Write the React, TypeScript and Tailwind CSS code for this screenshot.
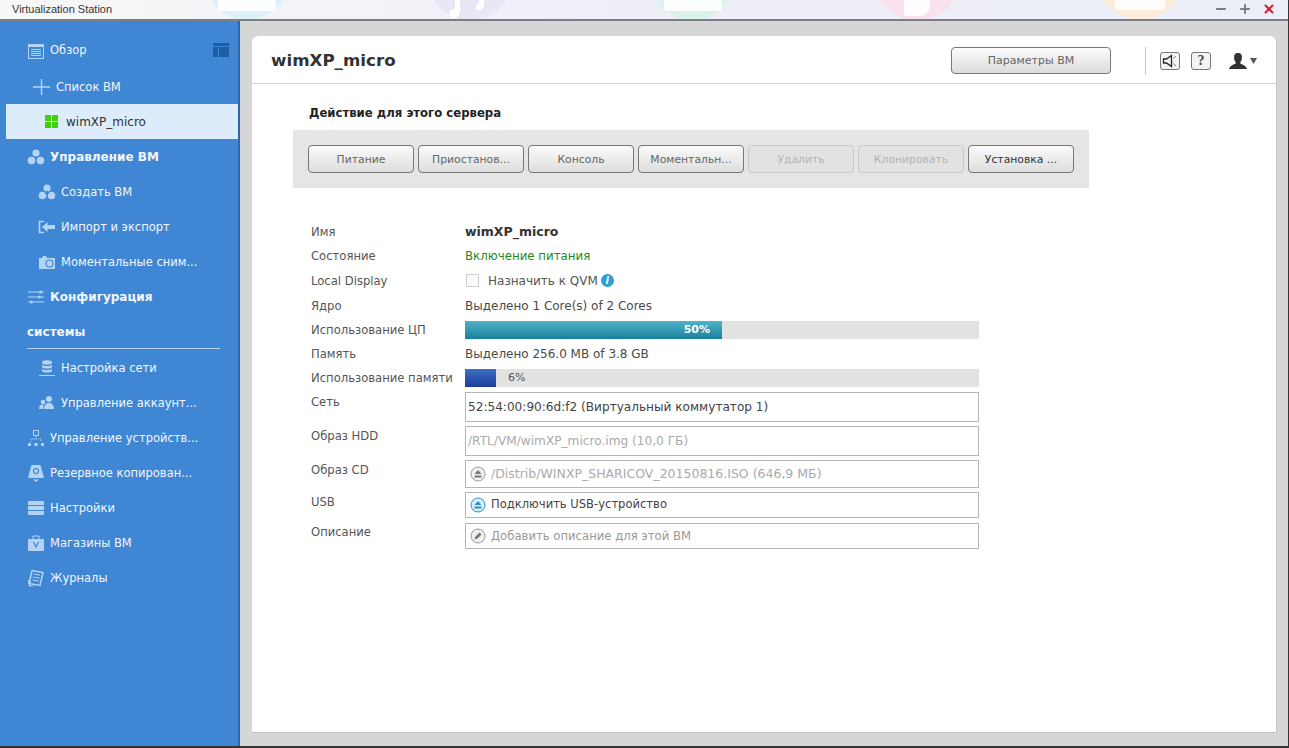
import type { ReactNode } from "react";
import { Minus, Plus, X } from "lucide-react";

const ICON = "#b4d4f5";

function Svg({ children, w = 18, h = 18 }: { children: ReactNode; w?: number; h?: number }) {
  return (
    <svg width={w} height={h} viewBox={`0 0 ${w} ${h}`} className="shrink-0">
      {children}
    </svg>
  );
}

const OverviewIcon = () => (
  <Svg>
    <rect x="1.5" y="2.5" width="15" height="14" fill="none" stroke={ICON} />
    <rect x="1" y="2" width="16" height="3" fill={ICON} />
    <path d="M4 7.5h10M4 9.5h10M4 11.5h10M4 13.5h10" stroke={ICON} />
  </Svg>
);
const PlusIcon = () => (
  <Svg>
    <path d="M0 9h17M8.5 1v16" stroke={ICON} strokeWidth="1.4" />
  </Svg>
);
const GroupIcon = () => (
  <Svg>
    <circle cx="9" cy="5" r="3.6" fill={ICON} />
    <circle cx="4.5" cy="12.5" r="3.8" fill={ICON} />
    <circle cx="13.5" cy="12.5" r="3.8" fill={ICON} />
  </Svg>
);
const CreateIcon = () => (
  <Svg>
    <circle cx="9" cy="5" r="3.6" fill={ICON} />
    <circle cx="4.5" cy="12.5" r="3.8" fill={ICON} />
    <circle cx="13.5" cy="12.5" r="3.8" fill={ICON} />
    <path d="M9 7.5v5M6.5 10h5" stroke="#3f86d4" strokeWidth="1.2" />
  </Svg>
);
const ImportIcon = () => (
  <Svg>
    <path d="M6 3.5H1.5v11H6" fill="none" stroke={ICON} strokeWidth="1.6" />
    <path d="M4 9l5.5-5v3H17v4H9.5v3z" fill={ICON} />
  </Svg>
);
const CameraIcon = () => (
  <Svg>
    <path d="M1 5h3l1-2h3l1 2h8v11H1z" fill={ICON} />
    <circle cx="11.5" cy="10.5" r="3.5" fill="none" stroke="#3f86d4" strokeWidth="1.2" />
  </Svg>
);
const SlidersIcon = () => (
  <Svg>
    <path d="M1 4h16M1 9h16M1 14h16" stroke={ICON} />
    <rect x="12" y="2.5" width="3" height="3" rx="1.5" fill={ICON} />
    <rect x="11" y="7.5" width="3" height="3" rx="1.5" fill={ICON} />
    <rect x="3" y="12.5" width="3" height="3" rx="1.5" fill={ICON} />
  </Svg>
);
const DbIcon = () => (
  <Svg>
    <ellipse cx="9" cy="3.5" rx="5" ry="2.2" fill={ICON} />
    <path d="M4 5.5c1 2 9 2 10 0v2.5c-1 2-9 2-10 0zM4 9.5c1 2 9 2 10 0V12c-1 2-9 2-10 0z" fill={ICON} />
    <path d="M1 16.5h16" stroke={ICON} />
  </Svg>
);
const UsersIcon = () => (
  <Svg>
    <circle cx="11" cy="5" r="3" fill={ICON} />
    <path d="M6 15c0-4 2-5 3.5-6h3c1.500 1 3.500 2 3.500 6z" fill={ICON} />
    <circle cx="5" cy="8" r="2.300" fill={ICON} />
    <path d="M1 15c0-3 1.500-4 3-4.500h1.500L5 15z" fill={ICON} />
  </Svg>
);
const TreeIcon = () => (
  <Svg>
    <rect x="6.500" y="1.500" width="5" height="5" fill="none" stroke={ICON} />
    <path d="M9 7v3M4 13v-3h10v3" fill="none" stroke={ICON} strokeDasharray="1 1" />
    <rect x="1" y="14" width="3" height="3" fill={ICON} />
    <rect x="7.500" y="14" width="3" height="3" fill={ICON} />
    <rect x="14" y="14" width="3" height="3" fill={ICON} />
  </Svg>
);
const BackupIcon = () => (
  <Svg>
    <path d="M4.500 1h9L17 14H1z" fill={ICON} />
    <path d="M6 15.500h6L9 18z" fill={ICON} />
    <circle cx="9" cy="7" r="2.500" fill="none" stroke="#3f86d4" strokeWidth="1.2" />
  </Svg>
);
const ServerIcon = () => (
  <Svg>
    <rect x="1" y="2" width="16" height="4" fill={ICON} />
    <rect x="1" y="7" width="16" height="4" fill={ICON} />
    <rect x="1" y="12" width="16" height="4" fill={ICON} />
  </Svg>
);
const BagIcon = () => (
  <Svg>
    <path d="M6 5V2h6v3" fill="none" stroke={ICON} />
    <rect x="1" y="5" width="16" height="12" fill={ICON} />
    <path d="M6.500 8l2.500 5 2.500-5" fill="none" stroke="#3f86d4" strokeWidth="1.2" />
  </Svg>
);
const LogIcon = () => (
  <Svg>
    <path d="M5 1.500l11 2-3 13-11-2z" fill="none" stroke={ICON} strokeWidth="1.500" />
    <path d="M1 11l3 1-1 4 5 1-6 .5z" fill={ICON} />
    <path d="M6.500 5l6.500 1.200M6 8l6.500 1.200M5.500 11l6.500 1.200" stroke={ICON} />
  </Svg>
);

function NavItem({
  icon,
  label,
  bold,
  indent = "pl-[27px]",
  gap = "gap-[5px]",
}: {
  icon?: ReactNode;
  label: string;
  bold?: boolean;
  indent?: string;
  gap?: string;
}) {
  return (
    <div className={`h-[35px] flex items-center ${indent} ${gap} text-[#f2f7fd] ${bold ? "text-[12px] font-bold" : "text-[11.5px]"}`}>
      {icon}
      <span className={`whitespace-nowrap ${bold ? "" : "pt-[2px]"}`}>{label}</span>
    </div>
  );
}

function Sidebar() {
  return (
    <aside className="w-[240px] shrink-0 bg-[#3f86d4] border-r-2 border-[#2c67a9] pt-[12px] pl-[6px]">
      <div className="-ml-[6px] h-[36px] flex items-center justify-between pl-[27px] pr-[9px] text-[11.5px] text-[#f2f7fd]">
        <div className="flex items-center gap-[5px]">
          <OverviewIcon />
          <span>Обзор</span>
        </div>
        <div className="w-[16px] h-[14px] flex flex-col gap-px mb-[2px]">
          <div className="h-[3px] bg-[#1c5da3]" />
          <div className="flex-1 flex gap-px">
            <div className="w-[5px] bg-[#1c5da3]" />
            <div className="flex-1 bg-[#1c5da3]" />
          </div>
        </div>
      </div>
      <div className="-ml-[6px]">
        <NavItem icon={<PlusIcon />} label="Список ВМ" indent="pl-[33px]" />
      </div>
      <div className="h-[35px] w-[232px] bg-[#dcecfb] flex items-center pl-[39px] gap-[8px] text-[12px] text-[#333333]">
        <div className="grid grid-cols-2 gap-px w-[13px] h-[13px]">
          <div className="bg-[#3fd10c]" />
          <div className="bg-[#3fd10c]" />
          <div className="bg-[#3fd10c]" />
          <div className="bg-[#3fd10c]" />
        </div>
        <span>wimXP_micro</span>
      </div>
      <div className="-ml-[6px]">
        <NavItem icon={<GroupIcon />} label="Управление ВМ" bold />
        <NavItem icon={<CreateIcon />} label="Создать ВМ" indent="pl-[38px]" />
        <NavItem icon={<ImportIcon />} label="Импорт и экспорт" indent="pl-[38px]" />
        <NavItem icon={<CameraIcon />} label="Моментальные сним..." indent="pl-[38px]" />
        <NavItem icon={<SlidersIcon />} label="Конфигурация" bold />
        <NavItem label="системы" bold />
        <div className="h-px bg-[#b7d3f1] ml-[27px] w-[193px] mb-px -mt-px" />
        <NavItem icon={<DbIcon />} label="Настройка сети" indent="pl-[38px]" />
        <NavItem icon={<UsersIcon />} label="Управление аккаунт..." indent="pl-[38px]" />
        <NavItem icon={<TreeIcon />} label="Управление устройств..." />
        <NavItem icon={<BackupIcon />} label="Резервное копирован..." />
        <NavItem icon={<ServerIcon />} label="Настройки" />
        <NavItem icon={<BagIcon />} label="Магазины ВМ" />
        <NavItem icon={<LogIcon />} label="Журналы" />
      </div>
    </aside>
  );
}

function ActionButton({ label, disabled, dark }: { label: string; disabled?: boolean; dark?: boolean }) {
  return (
    <button
      className={`w-[106px] h-[28px] rounded-[4px] border pt-[2px] text-[10.8px] ${
        disabled
          ? "border-[#c8c8c8] bg-[#e2e2e2] text-[#b4b4b4]"
          : `border-[#777777] bg-gradient-to-b from-[#fbfbfb] to-[#dddddd] ${dark ? "text-[#333333]" : "text-[#666666]"}`
      }`}
    >
      {label}
    </button>
  );
}

function Row({ label, h, children }: { label: string; h: string; children: ReactNode }) {
  return (
    <div className={`flex items-center ${h}`}>
      <div className="w-[154px] shrink-0 pt-[2px] text-[11.6px] text-[#555555]">{label}</div>
      <div className="flex-1 min-w-0">{children}</div>
    </div>
  );
}

function BoxRow({ label, h, lh = "leading-[20px]", children }: { label: string; h: string; lh?: string; children: ReactNode }) {
  return (
    <div className={`flex ${h}`}>
      <div className={`w-[154px] shrink-0 text-[11.6px] text-[#555555] ${lh}`}>{label}</div>
      <div className="flex-1 border border-[#b5b5b5] flex items-center gap-[5px] px-[2px]">{children}</div>
    </div>
  );
}

function DiscIcon({ active, pencil }: { active?: boolean; pencil?: boolean }) {
  const ring = active ? "#2f8fc4" : "#9a9a9a";
  const fill = active ? "#d8eefa" : "#f0f0f0";
  return (
    <svg width="16" height="16" viewBox="0 0 16 16" className="shrink-0 ml-[2px]">
      <circle cx="8" cy="8" r="7" fill={fill} stroke={ring} />
      {pencil ? (
        <path d="M4.500 11.500l1-3 4-4 2 2-4 4z" fill="#777777" />
      ) : (
        <>
          <path d="M8 4l3.500 4h-7z" fill={active ? "#2f8fc4" : "#777777"} />
          <rect x="4.500" y="9.500" width="7" height="2" fill={active ? "#2f8fc4" : "#777777"} />
        </>
      )}
    </svg>
  );
}

function Header() {
  return (
    <div className="h-[48px] shrink-0 flex items-center border-b border-[#d4d4d4] pl-[19px] pt-[2px]">
      <h1 className="text-[16.7px] font-bold text-[#333333] flex-1">wimXP_micro</h1>
      <button className="w-[160px] h-[27px] rounded-[4px] border border-[#777777] bg-gradient-to-b from-[#fbfbfb] to-[#dcdcdc] pt-[2px] text-[11px] text-[#666666]">
        Параметры ВМ
      </button>
      <div className="w-px h-[28px] bg-[#c4c4c4] ml-[34px] mr-[14px]" />
      <div className="w-[20px] h-[18px] rounded-[3px] border border-[#777777] bg-[#f4f4f4] flex items-center justify-center">
        <svg width="16" height="14" viewBox="0 0 16 14">
          <path d="M1.500 5h3l5-3.500v11l-5-3.500h-3z" fill="none" stroke="#222222" strokeWidth="1.3" />
          <path d="M11.500 4.500l2.500-2.500M11.500 9.500l2.500 2.500" stroke="#777777" />
        </svg>
      </div>
      <div className="w-[20px] h-[18px] ml-[11px] rounded-[3px] border border-[#777777] bg-[#f4f4f4] flex items-center justify-center text-[14px] font-bold text-[#444444] font-['Liberation_Serif',serif]">
        ?
      </div>
      <div className="ml-[18px] mr-[19px] flex items-center gap-[3px]">
        <svg width="18" height="18" viewBox="0 0 18 18">
          <path d="M9 1c3 0 4 2 4 4.500S11.500 10 11 11c1 1.500 6 2 7 6H0c1-4 6-4.500 7-6-.5-1-2-3-2-5.500S6 1 9 1z" fill="#333333" />
        </svg>
        <svg width="7" height="6" viewBox="0 0 7 6">
          <path d="M0 0h7L3.500 6z" fill="#555555" />
        </svg>
      </div>
    </div>
  );
}

function Details() {
  return (
    <div className="w-[668px] ml-[59px] mt-[32px] text-[12px] text-[#4a4a4a]">
      <Row label="Имя" h="h-[24px]">
        <span className="font-bold text-[#333333] text-[12.5px]">wimXP_micro</span>
      </Row>
      <Row label="Состояние" h="h-[24px]">
        <span className="text-[#1d8a1d] text-[11.8px]">Включение питания</span>
      </Row>
      <Row label="Local Display" h="h-[25px]">
        <div className="flex items-center">
          <div className="w-[13px] h-[13px] border border-[#cfcfcf] bg-[#fafafa] ml-px" />
          <span className="ml-[9px] text-[#555555]">Назначить к QVM</span>
          <span className="ml-[3px] w-[13px] h-[13px] rounded-full bg-[#2a9fd6] text-white text-[10px] font-bold italic flex items-center justify-center">
            i
          </span>
        </div>
      </Row>
      <Row label="Ядро" h="h-[25px]">
        Выделено 1 Core(s) of 2 Cores
      </Row>
      <Row label="Использование ЦП" h="h-[24px]">
        <div className="h-[18px] bg-[#e2e2e2]">
          <div className="h-full w-[257px] bg-gradient-to-b from-[#4fb3c6] to-[#17809f] text-white text-[11px] font-bold flex items-center justify-end pr-[12px]">
            50%
          </div>
        </div>
      </Row>
      <Row label="Память" h="h-[23px]">
        Выделено 256.0 MB of 3.8 GB
      </Row>
      <Row label="Использование памяти" h="h-[26px]">
        <div className="h-[18px] bg-[#e2e2e2] flex items-center text-[11px] text-[#555555]">
          <div className="h-full w-[31px] bg-gradient-to-b from-[#3f6fc4] to-[#1d3f9a]" />
          <span className="ml-[12px]">6%</span>
        </div>
      </Row>
      <div className="flex flex-col gap-[4px] mt-px">
        <BoxRow label="Сеть" h="h-[30px]">
          <span className="text-[#444444] text-[12.1px]">52:54:00:90:6d:f2 (Виртуальный коммутатор 1)</span>
        </BoxRow>
        <BoxRow label="Образ HDD" h="h-[30px]">
          <span className="text-[#aaaaaa] text-[12.15px]">/RTL/VM/wimXP_micro.img (10,0 ГБ)</span>
        </BoxRow>
        <BoxRow label="Образ CD" h="h-[28px]">
          <DiscIcon />
          <span className="text-[#aaaaaa] text-[12.5px]">/Distrib/WINXP_SHARICOV_20150816.ISO (646,9 МБ)</span>
        </BoxRow>
        <BoxRow label="USB" h="h-[26px]">
          <DiscIcon active />
          <span className="text-[#444444] text-[11.55px]">Подключить USB-устройство</span>
        </BoxRow>
        <div className="mt-px">
          <BoxRow label="Описание" h="h-[26px]" lh="leading-[18px]">
            <DiscIcon pencil />
            <span className="text-[#999999] text-[11.65px] pt-[2px]">Добавить описание для этой ВМ</span>
          </BoxRow>
        </div>
      </div>
    </div>
  );
}

function Bubble({ color, left, children }: { color: string; left: string; children: ReactNode }) {
  return (
    <div className={`absolute top-[-66px] w-[86px] h-[86px] rounded-full flex items-end justify-center ${color} ${left}`}>
      {children}
    </div>
  );
}

function TitleBar() {
  const bar = <div className="w-[58px] h-[11px] mb-[9px] bg-white/90 rounded-b-[3px]" />;
  return (
    <div className="relative h-[21px] shrink-0 overflow-hidden bg-gradient-to-r from-[#f8f8f8] via-[#eeeef8] to-[#eceff8] border-b-2 border-[#7d7d85] flex items-center justify-between px-[12px]">
      <Bubble color="bg-[#dff2f9]" left="left-[204px]">{bar}</Bubble>
      <Bubble color="bg-[#e9e6f6]" left="left-[427px]">
        <svg width="46" height="20" viewBox="0 0 46 20" className="mb-[1px]">
          <path d="M8 0h5v12c0 4-2 7-6 7s-5-3-4-6 3-3 5-3zM32 0h5v6c0 3-2 5-5 5s-4-2-3-4 2-2 3-2z" fill="#ffffff" />
        </svg>
      </Bubble>
      <Bubble color="bg-[#dcf3ec]" left="left-[650px]">{bar}</Bubble>
      <Bubble color="bg-[#f9e1ed]" left="left-[874px]">
        <div className="w-[26px] h-[16px] mb-[4px] bg-white/90 rounded-br-[10px] rounded-bl-[2px]" />
      </Bubble>
      <Bubble color="bg-[#fdecd9]" left="left-[1097px]">
        <div className="w-[50px] h-[10px] mb-[10px] bg-white/90 rounded-b-[3px]" />
      </Bubble>
      <span className="relative text-[11px] text-[#333333] font-['Liberation_Sans',sans-serif]">Virtualization Station</span>
      <div className="relative flex items-center gap-[10px] -mt-[2px]">
        <Minus size={14} strokeWidth={3.5} className="text-[#7c7c84]" />
        <Plus size={14} strokeWidth={3.5} className="text-[#7c7c84]" />
        <X size={14} strokeWidth={3.5} className="text-[#d2222d]" />
      </div>
    </div>
  );
}

export default function App() {
  return (
    <div className="w-[1289px] h-[748px] flex flex-col overflow-hidden bg-[#d6d6d6] border-r border-b-2 border-[#333333] font-['DejaVu_Sans',sans-serif]">
      <TitleBar />
      <div className="flex flex-1 min-h-0">
        <Sidebar />
        <div className="flex-1 min-w-0 pl-[12px] pr-[11px] pt-[15px] pb-[13px]">
          <div className="h-full bg-white rounded-t-[6px] border-r border-b border-[#c4c4c4] flex flex-col">
            <Header />
            <h2 className="ml-[57px] mt-[21px] text-[11.7px] font-bold text-[#222222] leading-[16px]">Действие для этого сервера</h2>
            <div className="ml-[41px] mt-[9px] w-[796px] h-[58px] bg-[#e5e5e5] flex items-center gap-[4px] pl-[15px]">
              <ActionButton label="Питание" />
              <ActionButton label="Приостанов..." />
              <ActionButton label="Консоль" />
              <ActionButton label="Моментальн..." />
              <ActionButton label="Удалить" disabled />
              <ActionButton label="Клонировать" disabled />
              <ActionButton label="Установка ..." dark />
            </div>
            <Details />
          </div>
        </div>
      </div>
    </div>
  );
}
